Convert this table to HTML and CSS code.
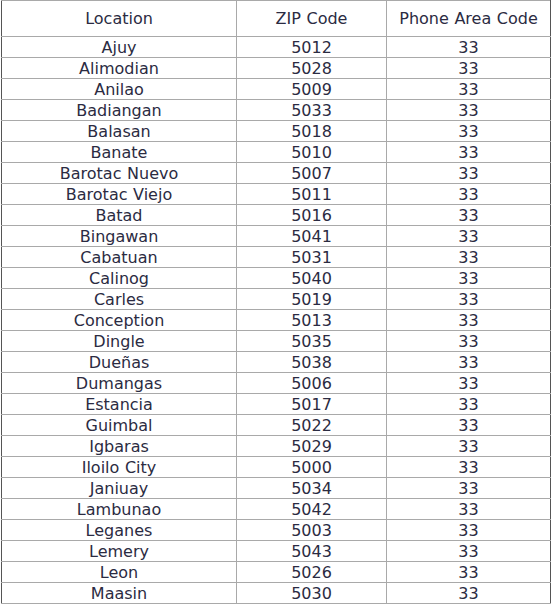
FILE: index.html
```html
<!DOCTYPE html>
<html>
<head>
<meta charset="utf-8">
<link rel="stylesheet" href="styles.css">
</head>
<body>
<table class="zip-table">
<colgroup><col class="c1"><col class="c2"><col class="c3"></colgroup>
<thead>
<tr><th>Location</th><th>ZIP Code</th><th>Phone Area Code</th></tr>
</thead>
<tbody>
<tr><td>Ajuy</td><td>5012</td><td>33</td></tr>
<tr><td>Alimodian</td><td>5028</td><td>33</td></tr>
<tr><td>Anilao</td><td>5009</td><td>33</td></tr>
<tr><td>Badiangan</td><td>5033</td><td>33</td></tr>
<tr><td>Balasan</td><td>5018</td><td>33</td></tr>
<tr><td>Banate</td><td>5010</td><td>33</td></tr>
<tr><td>Barotac Nuevo</td><td>5007</td><td>33</td></tr>
<tr><td>Barotac Viejo</td><td>5011</td><td>33</td></tr>
<tr><td>Batad</td><td>5016</td><td>33</td></tr>
<tr><td>Bingawan</td><td>5041</td><td>33</td></tr>
<tr><td>Cabatuan</td><td>5031</td><td>33</td></tr>
<tr><td>Calinog</td><td>5040</td><td>33</td></tr>
<tr><td>Carles</td><td>5019</td><td>33</td></tr>
<tr><td>Conception</td><td>5013</td><td>33</td></tr>
<tr><td>Dingle</td><td>5035</td><td>33</td></tr>
<tr><td>Dueñas</td><td>5038</td><td>33</td></tr>
<tr><td>Dumangas</td><td>5006</td><td>33</td></tr>
<tr><td>Estancia</td><td>5017</td><td>33</td></tr>
<tr><td>Guimbal</td><td>5022</td><td>33</td></tr>
<tr><td>Igbaras</td><td>5029</td><td>33</td></tr>
<tr><td>Iloilo City</td><td>5000</td><td>33</td></tr>
<tr><td>Janiuay</td><td>5034</td><td>33</td></tr>
<tr><td>Lambunao</td><td>5042</td><td>33</td></tr>
<tr><td>Leganes</td><td>5003</td><td>33</td></tr>
<tr><td>Lemery</td><td>5043</td><td>33</td></tr>
<tr><td>Leon</td><td>5026</td><td>33</td></tr>
<tr><td>Maasin</td><td>5030</td><td>33</td></tr>
</tbody>
</table>
</body>
</html>
```

FILE: styles.css
```css
html, body {
  margin: 0;
  padding: 0;
  background: #ffffff;
}
body {
  padding-left: 1px;
}
.zip-table {
  border-collapse: collapse;
  table-layout: fixed;
  width: 549px;
  font-family: "DejaVu Sans", Verdana, sans-serif;
  font-size: 16px;
  word-spacing: 0.5px;
  color: #2b2b42;
}
.c1 { width: 235px; }
.c2 { width: 150px; }
.c3 { width: 164px; }
.zip-table th,
.zip-table td {
  border: 1px solid #a9a9a9;
  padding: 0;
  text-align: center;
  white-space: nowrap;
}
.zip-table th {
  font-weight: normal;
  line-height: 35px;
  height: 35px;
}
.zip-table td {
  padding-top: 1px;
  line-height: 19px;
  height: 19px;
}
.zip-table th:first-child,
.zip-table td:first-child {
  border-left-color: #555555;
}
.zip-table th:last-child,
.zip-table td:last-child {
  border-right-color: #555555;
}
```
